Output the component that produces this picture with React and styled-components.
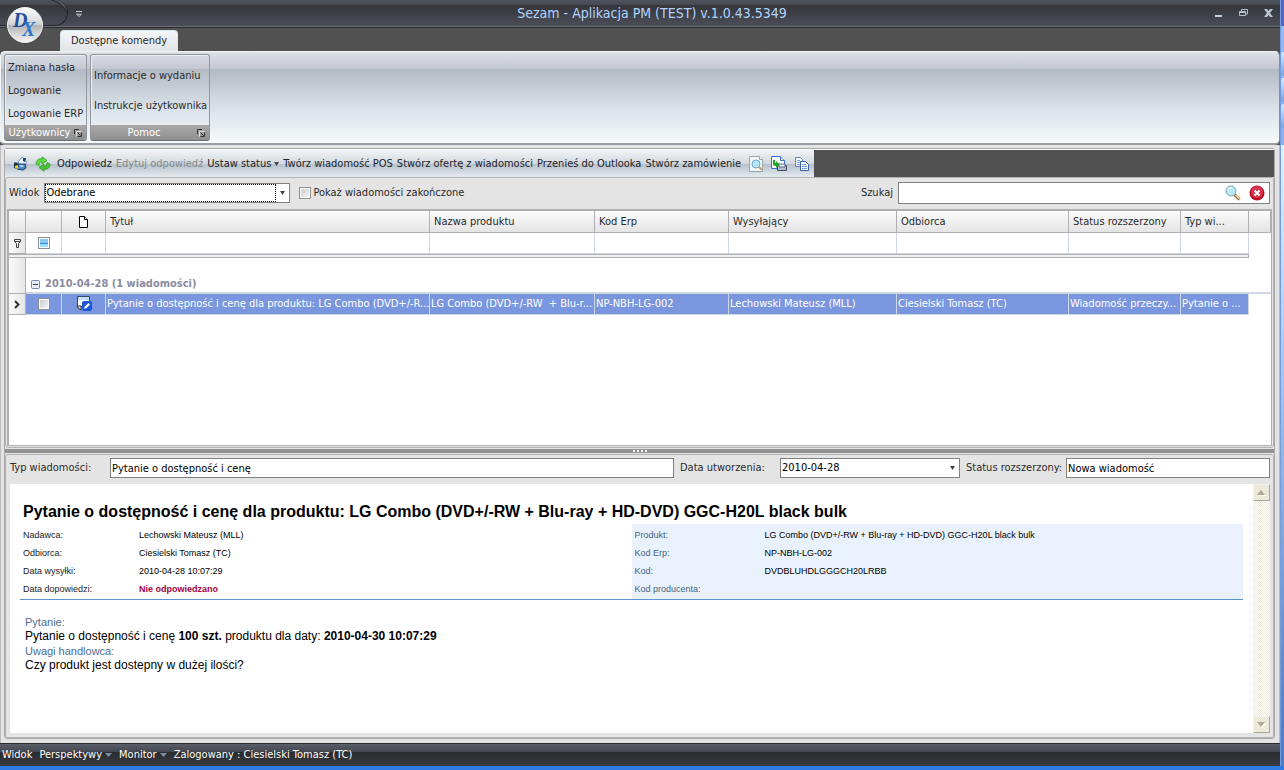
import React from "react"
import styled, { createGlobalStyle } from "styled-components"

const commands = [
  { label: "Odpowiedz" },
  { label: "Edytuj odpowiedź", disabled: true },
  { label: "Ustaw status", menu: true },
  { label: "Twórz wiadomość POS" },
  { label: "Stwórz ofertę z wiadomości" },
  { label: "Przenieś do Outlooka" },
  { label: "Stwórz zamówienie" },
]

const columns = [
  { title: "Tytuł" },
  { title: "Nazwa produktu", width: 165 },
  { title: "Kod Erp", width: 134 },
  { title: "Wysyłający", width: 168 },
  { title: "Odbiorca", width: 172 },
  { title: "Status rozszerzony", width: 112 },
  { title: "Typ wi...", width: 68 },
]

const message = [
  "Pytanie o dostępność i cenę dla produktu: LG Combo (DVD+/-R...",
  "LG Combo (DVD+/-RW\u00a0 + Blu-r...",
  "NP-NBH-LG-002",
  "Lechowski Mateusz (MLL)",
  "Ciesielski Tomasz (TC)",
  "Wiadomość przeczy...",
  "Pytanie o ...",
]

const sender = [
  ["Nadawca:", "Lechowski Mateusz (MLL)"],
  ["Odbiorca:", "Ciesielski Tomasz (TC)"],
  ["Data wysyłki:", "2010-04-28 10:07:29"],
  ["Data dopowiedzi:", "Nie odpowiedzano"],
]

const product = [
  ["Produkt:", "LG Combo (DVD+/-RW + Blu-ray + HD-DVD) GGC-H20L black bulk"],
  ["Kod Erp:", "NP-NBH-LG-002"],
  ["Kod:", "DVDBLUHDLGGGCH20LRBB"],
  ["Kod producenta:", ""],
]

const Logo = () => (
  <svg width="38" height="38" viewBox="0 0 38 38">
    <defs>
      <linearGradient id="orb" x1="0" y1="0" x2="0" y2="1">
        <stop offset="0" stopColor="#ffffff" />
        <stop offset="0.48" stopColor="#d3d3d6" />
        <stop offset="0.52" stopColor="#b4b4b8" />
        <stop offset="1" stopColor="#f6f6f6" />
      </linearGradient>
    </defs>
    <circle cx="19" cy="19" r="18.5" fill="#3a3b40" />
    <circle cx="19" cy="19" r="17.5" fill="url(#orb)" stroke="#f2f2f2" />
    <g fontFamily="Liberation Serif, serif" fontStyle="italic" fontWeight="bold">
      <text x="7" y="21" fontSize="20" fill="#1f4f9c">D</text>
      <text x="16" y="30" fontSize="20" fill="#2b78c8">X</text>
    </g>
  </svg>
)

const QuickMenuIcon = () => (
  <svg width="6" height="6" viewBox="0 0 6 6" fill="none" stroke="#c9ccd2">
    <path d="M0 .5h6M.5 3.2 3 5.5 5.500 3.200z" />
  </svg>
)

const MinimizeIcon = () => (
  <svg width="9" height="10" viewBox="0 0 9 10">
    <path d="M1 7h7v2H1z" fill="#c6d0db" />
  </svg>
)

const RestoreIcon = () => (
  <svg width="9" height="10" viewBox="0 0 9 10" fill="none" stroke="#b4bfca">
    <path d="M2.500 3V1.500h6V6H7" />
    <path d="M.5 3.500h6v4h-6zM.5 4.500h6" />
  </svg>
)

const CloseIcon = () => (
  <svg width="9" height="10" viewBox="0 0 9 10">
    <path d="M0 1h3l1.500 2L6 1h3L6 5l3 4H6L4.500 7 3 9H0l3-4z" fill="#b9c6d2" />
  </svg>
)

const LauncherIcon = () => (
  <svg width="8" height="8" viewBox="0 0 8 8" fill="none" stroke="#333">
    <path d="M.5 5V.5H5" />
    <path d="M2.500 7.500v-5h5" stroke="#ddd" />
    <path d="m3.500 3.500 3 3M7.500 3.500v4h-4" />
  </svg>
)

const MailIcon = () => (
  <svg width="16" height="16" viewBox="0 0 16 16">
    <path d="m6 6 4-5 4 3v5l-6 2z" fill="#eaf5ff" stroke="#6f93bd" />
    <path d="M11 2h3l-1 4-2-1z" fill="#1c3e70" />
    <path d="M6 8h7l1 4-3 2-6-1z" fill="#4d87c4" stroke="#1f3c63" />
    <path d="m7 9 5 .5-2 2z" fill="#cfe6fa" />
    <path d="M2 6.500h3L7 9l-2 4-3-1z" fill="#16324f" />
    <path d="m3 10 3-1v4l-3-1z" fill="#f6d31c" />
  </svg>
)

const RefreshIcon = () => (
  <svg width="16" height="16" viewBox="0 0 16 16" stroke="#2b9420" strokeWidth=".7">
    <path d="M1 8C1 4 4 2 7 3V.8L12 4.500 7 8V6C5 5.500 4 7 4 9.500z" fill="#5edb40" />
    <path d="M15 8c0 4-3 6-6 5v2.200L4 11.500 9 8v2c2 .5 3-1 3-3.500z" fill="#43c62e" />
  </svg>
)

const PreviewIcon = () => (
  <svg width="16" height="16" viewBox="0 0 16 16">
    <path d="M1.500.5h10l3 3v12h-13z" fill="#f3f6f8" stroke="#9ba5ae" />
    <path d="M11.500.5v3h3" fill="#fff" stroke="#9ba5ae" />
    <circle cx="8" cy="8" r="4" fill="#b9e6f8" stroke="#6aa9cb" />
    <path d="m11 11 3 3" stroke="#caa266" strokeWidth="2" />
  </svg>
)

const ExportIcon = () => (
  <svg width="16" height="16" viewBox="0 0 16 16">
    <path d="M.5.5h9l4 4v8H.5z" fill="#fff" stroke="#3570d4" />
    <path d="M9.500.5v4h4" fill="#d4e5fb" stroke="#3570d4" />
    <path d="M6.500 9.500h9v5h-9z" fill="#b6bccb" stroke="#3f4a6b" />
    <path d="M8 8h6v3H8z" fill="#e9edf4" stroke="#5d6a89" />
    <path d="M2 4v4c0 1 1 2 3 2v2l4-3.500L5 5v2C4 7 4 6 4 4z" fill="#20a42c" />
  </svg>
)

const CopyIcon = () => (
  <svg width="16" height="16" viewBox="0 0 16 16" fill="#f7faff" stroke="#5f83bb">
    <path d="M1.500 1.500h5l2 2v7h-7z" />
    <path d="M3 4.500h3m-3 2h3m-3 2h3" stroke="#6ea2e8" />
    <path d="M6.500 5.500h5l3 3v6h-8z" stroke="#3b5ea8" />
    <path d="M8 8.500h4m-4 2h5m-5 2h5" stroke="#6ea2e8" />
  </svg>
)

const SearchIcon = () => (
  <svg width="16" height="16" viewBox="0 0 16 16">
    <path d="m9.500 9.500 5 5" stroke="#7b5f36" strokeWidth="3" />
    <path d="m10.500 9.800 4 4" stroke="#edc888" strokeWidth="2" />
    <circle cx="6" cy="6" r="5" fill="#b6e8fa" stroke="#83a3b7" />
    <path d="M3 5c.5-2 2-2.500 4-2" stroke="#fff" fill="none" strokeWidth="1.500" />
  </svg>
)

const ClearIcon = () => (
  <svg width="16" height="16" viewBox="0 0 16 16">
    <circle cx="8" cy="8" r="7.500" fill="#b90d27" />
    <circle cx="8" cy="7" r="6" fill="#d93550" />
    <path d="m5.500 5.500 5 5m0-5-5 5" stroke="#fff" strokeWidth="2" />
  </svg>
)

const PageIcon = () => (
  <svg width="10" height="12" viewBox="0 0 10 12" fill="#fff" stroke="#000">
    <path d="M.5.5h5l3 3v8h-8z" />
    <path d="M5.500.5v3h3" />
  </svg>
)

const FilterIcon = () => (
  <svg width="7" height="9" viewBox="0 0 7 9" fill="none" stroke="#444">
    <path d="M.5.5h6v2l-2 2v4h-2v-4l-2-2zM.5 2.500h6" />
  </svg>
)

const CollapseIcon = () => (
  <svg width="9" height="9" viewBox="0 0 9 9">
    <rect x=".5" y=".5" width="8" height="8" rx="1" fill="#e8edf6" stroke="#7687a8" />
    <path d="M2 4.500h5" stroke="#33415f" />
  </svg>
)

const PointerIcon = () => (
  <svg width="6" height="9" viewBox="0 0 6 9" fill="none" stroke="#333" strokeWidth="2">
    <path d="m1 1 3.500 3.500L1 8" />
  </svg>
)

const EditedIcon = () => (
  <svg width="16" height="16" viewBox="0 0 16 16">
    <path d="M1.500.5h12v10h-9v3l-2-3h-1z" fill="#fff" stroke="#37476b" />
    <path d="M2 1h11v3H2z" fill="#bfe1fa" />
    <path d="M1 10h4v4l-3-2z" fill="#ddd" stroke="#333" />
    <rect x="6" y="5" width="10" height="10" rx="2" fill="#1c55d8" />
    <path d="m8 13 .8-2.500L12.500 7l1.600 1.500L10.500 12z" fill="#fff" />
  </svg>
)

const Caret = ({ color = "#444", size = 5 }) => (
  <svg width={size} height="4" viewBox="0 0 6 4" preserveAspectRatio="none">
    <path d="M0 0h6L3 4z" fill={color} />
  </svg>
)

const ScrollArrow = ({ up }) => (
  <svg width="9" height="6" viewBox="0 0 9 6">
    <path d={up ? "M1 6h8L5 1z" : "M1 1h8L5 6z"} fill="#fff" />
    <path d={up ? "M0 5h8L4 0z" : "M0 0h8L4 5z"} fill="#aca899" />
  </svg>
)

const App = () => {
  return (
    <Desktop>
      <GlobalStyle />
      <Window>
        <TitleBar>
          <QuickAccess>
            <OrbSocket />
            <PlainButton aria-label="Dostosuj pasek">
              <QuickMenuIcon />
            </PlainButton>
          </QuickAccess>
          <Title>Sezam - Aplikacja PM (TEST) v.1.0.43.5349</Title>
          <WindowButtons>
            <PlainButton aria-label="Minimalizuj"><MinimizeIcon /></PlainButton>
            <PlainButton aria-label="Przywróć"><RestoreIcon /></PlainButton>
            <PlainButton aria-label="Zamknij"><CloseIcon /></PlainButton>
          </WindowButtons>
          <OrbButton aria-label="Menu aplikacji"><Logo /></OrbButton>
        </TitleBar>
        <TabStrip>
          <Tab>Dostępne komendy</Tab>
        </TabStrip>
        <Ribbon>
          <RibbonGroup>
            <RibbonItems>
              <RibbonButton>Zmiana hasła</RibbonButton>
              <RibbonButton>Logowanie</RibbonButton>
              <RibbonButton>Logowanie ERP</RibbonButton>
            </RibbonItems>
            <RibbonCaption>
              <span>Użytkownicy</span>
              <PlainButton aria-label="Więcej: Użytkownicy"><LauncherIcon /></PlainButton>
            </RibbonCaption>
          </RibbonGroup>
          <RibbonGroup $wide>
            <RibbonItems $loose>
              <RibbonButton>Informacje o wydaniu</RibbonButton>
              <RibbonButton>Instrukcje użytkownika</RibbonButton>
            </RibbonItems>
            <RibbonCaption>
              <span>Pomoc</span>
              <PlainButton aria-label="Więcej: Pomoc"><LauncherIcon /></PlainButton>
            </RibbonCaption>
          </RibbonGroup>
        </Ribbon>

        <Workspace>
          <Frame>
            <ToolbarRow>
              <Toolbar>
                <PlainButton aria-label="Wyślij"><MailIcon /></PlainButton>
                <PlainButton aria-label="Odśwież"><RefreshIcon /></PlainButton>
                <Commands>
                  {commands.map(({ label, disabled, menu }) => (
                    <ToolButton key={label} disabled={disabled}>
                      {label}
                      {menu && <Caret />}
                    </ToolButton>
                  ))}
                </Commands>
                <PlainButton aria-label="Podgląd"><PreviewIcon /></PlainButton>
                <PlainButton aria-label="Eksport"><ExportIcon /></PlainButton>
                <PlainButton aria-label="Kopiuj"><CopyIcon /></PlainButton>
              </Toolbar>
            </ToolbarRow>

            <ListPanel>
              <FilterBar>
                <label htmlFor="view">Widok</label>
                <SelectBox $width={246}>
                  <Select id="view" $focused defaultValue="Odebrane">
                    <option>Odebrane</option>
                  </Select>
                  <Caret />
                </SelectBox>
                <CheckLabel>
                  <Checkbox type="checkbox" />
                  Pokaż wiadomości zakończone
                </CheckLabel>
                <SearchLabel htmlFor="search">Szukaj</SearchLabel>
                <SearchBox>
                  <input id="search" type="text" />
                  <PlainButton aria-label="Znajdź"><SearchIcon /></PlainButton>
                  <PlainButton aria-label="Wyczyść"><ClearIcon /></PlainButton>
                </SearchBox>
              </FilterBar>

              <GridBox>
                <Grid>
                  <colgroup>
                    <col width="17" />
                    <col width="36" />
                    <col width="44" />
                    {columns.map(c => (
                      <col key={c.title} width={c.width} />
                    ))}
                    <col width="22" />
                  </colgroup>
                  <thead>
                    <HeadRow>
                      <th />
                      <th />
                      <th><PageIcon /></th>
                      {columns.map(c => (
                        <th key={c.title} className="text">{c.title}</th>
                      ))}
                      <th />
                    </HeadRow>
                    <FilterRow>
                      <td className="indicator"><FilterIcon /></td>
                      <td>
                        <Checkbox type="checkbox" $mixed aria-label="Filtruj zaznaczone" />
                      </td>
                      <td />
                      {columns.map(c => (
                        <td key={c.title} />
                      ))}
                      <td className="rest" />
                    </FilterRow>
                    <BandRow>
                      <td colSpan={columns.length + 3} />
                      <td className="rest" />
                    </BandRow>
                  </thead>
                  <tbody>
                    <GroupRow>
                      <td className="indicator" />
                      <td colSpan={columns.length + 3}>
                        <GroupTitle>
                          <CollapseIcon />
                          2010-04-28 (1 wiadomości)
                        </GroupTitle>
                      </td>
                    </GroupRow>
                    <DataRow>
                      <td className="indicator"><PointerIcon /></td>
                      <td><Checkbox type="checkbox" aria-label="Zaznacz wiadomość" /></td>
                      <td><EditedIcon /></td>
                      {message.map(text => (
                        <td key={text} className="text">{text}</td>
                      ))}
                      <td className="rest" />
                    </DataRow>
                  </tbody>
                </Grid>
              </GridBox>
            </ListPanel>

            <Splitter>
              <i />
              <i />
              <i />
              <i />
            </Splitter>

            <DetailPanel>
              <DetailBar>
                <FieldLabel htmlFor="type" $width={96}>Typ wiadomości:</FieldLabel>
                <TextInput id="type" $grow defaultValue="Pytanie o dostępność i cenę" />
                <FieldLabel htmlFor="created" $width={96}>Data utworzenia:</FieldLabel>
                <SelectBox $width={180}>
                  <Select id="created" defaultValue="2010-04-28">
                    <option>2010-04-28</option>
                  </Select>
                  <Caret />
                </SelectBox>
                <FieldLabel htmlFor="status" $width={96}>Status rozszerzony:</FieldLabel>
                <TextInput id="status" defaultValue="Nowa wiadomość" />
              </DetailBar>

              <Viewer>
                <Document>
                  <h1>
                    Pytanie o dostępność i cenę dla produktu: LG Combo (DVD+/-RW + Blu-ray + HD-DVD)
                    GGC-H20L black bulk
                  </h1>
                  <Summary>
                    <Facts $labelWidth={116}>
                      {sender.map(([name, value]) => (
                        <React.Fragment key={name}>
                          <dt>{name}</dt>
                          <dd className={value === "Nie odpowiedzano" ? "alert" : undefined}>{value}</dd>
                        </React.Fragment>
                      ))}
                    </Facts>
                    <Facts $labelWidth={130} $tinted>
                      {product.map(([name, value]) => (
                        <React.Fragment key={name}>
                          <dt>{name}</dt>
                          <dd>{value}</dd>
                        </React.Fragment>
                      ))}
                    </Facts>
                  </Summary>
                  <Question>
                    <h2>Pytanie:</h2>
                    <p>
                      Pytanie o dostępność i cenę <b>100 szt.</b> produktu dla daty:{" "}
                      <b>2010-04-30 10:07:29</b>
                    </p>
                    <h2>Uwagi handlowca:</h2>
                    <p>Czy produkt jest dostepny w dużej ilości?</p>
                  </Question>
                </Document>
                <ScrollTrack>
                  <ScrollButton aria-label="W górę"><ScrollArrow up /></ScrollButton>
                  <ScrollButton aria-label="W dół"><ScrollArrow /></ScrollButton>
                </ScrollTrack>
              </Viewer>
            </DetailPanel>
          </Frame>
        </Workspace>

        <StatusBar>
          <StatusButton>Widok</StatusButton>
          <StatusButton>Perspektywy <Caret color="#7f8fa3" size={7} /></StatusButton>
          <StatusButton>Monitor <Caret color="#7f8fa3" size={7} /></StatusButton>
          <span>Zalogowany : Ciesielski Tomasz (TC)</span>
        </StatusBar>
      </Window>
      <BackgroundWindow>
        <div />
        <div />
        <div />
      </BackgroundWindow>
    </Desktop>
  )
}

const GlobalStyle = createGlobalStyle`
  * {
    box-sizing: border-box;
  }
  body {
    margin: 0;
    background: #2f7be6;
    font-family: "DejaVu Sans Condensed", "DejaVu Sans", sans-serif;
    font-size: 11px;
    line-height: 14px;
    color: #2a2a2a;
  }
  button, input, select {
    font: inherit;
    color: inherit;
    margin: 0;
    padding: 0;
    border: 0;
    border-radius: 0;
  }
  svg {
    display: block;
    flex: none;
  }
`

const Desktop = styled.div`
  display: grid;
  grid-template-columns: minmax(0, 1fr) 4px;
  min-height: 100vh;
  padding-bottom: 4px;
`

const Window = styled.div`
  display: flex;
  flex-direction: column;
  background: #515151;
`

const PlainButton = styled.button`
  display: flex;
  align-items: center;
  justify-content: center;
  background: none;
`

const TitleBar = styled.header`
  position: relative;
  display: grid;
  grid-template-columns: 1fr auto 1fr;
  height: 28px;
  background: linear-gradient(#50545f, #444852 5px, #35363b 5px, #4b4e58 26px, #6a6e78 26px, #6a6e78 27px, #2a2b31 27px);
`

const QuickAccess = styled.div`
  display: flex;
  gap: 8px;
`

const OrbSocket = styled.div`
  width: 68px;
  height: 26px;
  border: 1px solid #24252a;
  border-width: 0 1px 1px 0;
  border-radius: 0 14px 14px 0;
  background: radial-gradient(circle at 8px 27px, transparent 27px, #26272c 28px, #555862 29px, #666a74 46px) right / 32px 26px no-repeat;
`

const OrbButton = styled.button`
  position: absolute;
  left: 6px;
  top: 6px;
  background: none;
`

const Title = styled.h1`
  margin: 0;
  padding-left: 24px;
  font-size: 14px;
  line-height: 26px;
  font-weight: 400;
  color: #b0d4ff;
`

const WindowButtons = styled.div`
  display: flex;
  justify-content: flex-end;
  gap: 16px;
  padding-right: 7px;
  height: 26px;
`

const TabStrip = styled.nav`
  display: flex;
  align-items: flex-end;
  height: 23px;
  padding-left: 60px;
`

const Tab = styled.button`
  height: 21px;
  padding: 0 10px;
  border: 1px solid #d4e8ee;
  border-bottom: 0;
  border-radius: 4px 4px 0 0;
  background: linear-gradient(#f4f5f7, #e2e4e9);
`

const Ribbon = styled.section`
  display: flex;
  align-items: flex-start;
  gap: 3px;
  height: 94px;
  padding: 2px 3px;
  border: 1px solid #f2f4f6;
  border-right-color: #8b8f94;
  border-bottom: 2px solid #9a9da1;
  border-radius: 5px;
  background: linear-gradient(#dee1e6, #c3c7d1 17px, #b3bac4 17px, #dbe3ea 58px, #f6fafb);
`

const RibbonGroup = styled.div`
  display: flex;
  flex-direction: column;
  width: ${({ $wide }) => ($wide ? "120px" : "83px")};
  height: 87px;
  border: 1px solid #93979d;
  border-bottom-color: #6e6e6e;
  border-radius: 3px;
  box-shadow: inset 1px 1px 0 #eceef1;
`

const RibbonItems = styled.div`
  flex: 1;
  display: flex;
  flex-direction: column;
  justify-content: center;
  align-items: flex-start;
  gap: ${({ $loose }) => ($loose ? "16px" : "9px")};
  padding: 2px 0 0 3px;
`

const RibbonButton = styled.button`
  background: none;
  white-space: nowrap;
`

const RibbonCaption = styled.div`
  display: flex;
  height: 15px;
  padding-right: 4px;
  background: linear-gradient(#a9a9a9, #8f8f8f);
  color: #fff;
  span {
    flex: 1;
    line-height: 15px;
    text-align: center;
  }
`

const Workspace = styled.main`
  flex: 1;
  display: flex;
  padding: 3px 4px 4px 3px;
  background: #e4e4e4;
  border: 1px solid #bcbcbc;
  border-width: 0 1px;
`

const Frame = styled.div`
  flex: 1;
  min-width: 0;
  display: flex;
  flex-direction: column;
  border: 1px solid #a8a8a8;
  border-radius: 3px;
`

const ToolbarRow = styled.div`
  display: flex;
  height: 28px;
  background: #515151;
  border-top: 1px solid #fff;
`

const Toolbar = styled.div`
  display: flex;
  align-items: center;
  gap: 7px;
  padding: 0 4px 0 7px;
  background: linear-gradient(#f2f4f6, #d2d9df 50%, #b4bec7 50%, #e4ecf1);
`

const Commands = styled.div`
  display: flex;
  gap: 4px;
  margin-left: -1px;
`

const ToolButton = styled.button`
  display: flex;
  align-items: center;
  gap: 3px;
  background: none;
  white-space: nowrap;
  color: #1e2226;
  &:disabled {
    color: #84898d;
  }
`

const ListPanel = styled.section`
  flex: 1;
  display: flex;
  flex-direction: column;
  padding: 3px 1px 1px;
  border: 1px solid #b4b4b4;
  border-radius: 3px;
`

const FilterBar = styled.div`
  display: flex;
  align-items: center;
  gap: 5px;
  height: 24px;
  padding: 0 2px;
`

const SelectBox = styled.div`
  display: flex;
  align-items: center;
  gap: 4px;
  width: ${({ $width }) => $width}px;
  height: 20px;
  padding-right: 4px;
  border: 1px solid #808080;
  background: #fff;
`

const Select = styled.select`
  flex: 1;
  height: 18px;
  appearance: none;
  border: 1px ${({ $focused }) => ($focused ? "dotted #000" : "solid #fff")};
  background: #fff;
  color: #000;
`

const CheckLabel = styled.label`
  display: flex;
  align-items: center;
  gap: 2px;
  padding-left: 4px;
`

const Checkbox = styled.input`
  appearance: none;
  display: inline-block;
  width: 12px;
  height: 12px;
  vertical-align: middle;
  border: 1px solid #8a8f94;
  background: ${({ $mixed }) =>
    $mixed ? "linear-gradient(#8ac8f2 5px, #3388d0 5px, #3388d0 6px, #9adcff 6px)" : "linear-gradient(135deg, #c8c8c8, #f8f8f8)"};
  box-shadow: inset 0 0 0 1px #fff;
`

const SearchLabel = styled.label`
  margin-left: auto;
`

const SearchBox = styled.div`
  display: flex;
  align-items: center;
  gap: 8px;
  width: 372px;
  height: 22px;
  padding-right: 4px;
  border: 1px solid #808080;
  background: #fff;
  input {
    flex: 1;
    min-width: 0;
    height: 18px;
    outline: 0;
  }
`

const GridBox = styled.div`
  flex: 1;
  min-height: 236px;
  margin-top: 4px;
  border: 2px solid #b0b0b0;
  border-width: 2px 1px 1px 2px;
  background: #fff;
`

const Grid = styled.table`
  width: 100%;
  table-layout: fixed;
  border-collapse: separate;
  border-spacing: 0;
  td,
  th {
    padding: 0;
    font-weight: 400;
    text-align: center;
    overflow: hidden;
    white-space: nowrap;
  }
  td > svg,
  th > svg {
    margin: 0 auto;
  }
  .text {
    text-align: left;
  }
  .indicator {
    background: linear-gradient(90deg, #fafafa, #e6e6e6);
    border-right: 1px solid #b0b0b0;
    border-bottom: 1px solid #b0b0b0;
  }
`

const HeadRow = styled.tr`
  height: 22px;
  th {
    background: linear-gradient(#fbfbfb, #e4e4e4);
    border-right: 1px solid #b0b0b0;
    border-bottom: 1px solid #b0b0b0;
  }
  .text {
    padding-left: 4px;
  }
`

const FilterRow = styled.tr`
  height: 21px;
  td {
    border-right: 1px solid #cfd6e4;
    border-bottom: 1px solid #cfd6e4;
  }
  td.rest {
    border: 0;
  }
`

const BandRow = styled.tr`
  height: 4px;
  td {
    background: #f0f0f0;
    border: 1px solid #b0b0b0;
    border-left: 0;
  }
  td.rest {
    background: #fff;
    border: 0;
  }
`

const GroupRow = styled.tr`
  height: 36px;
  td {
    border-bottom: 2px solid #cfd6e4;
    vertical-align: bottom;
  }
`

const GroupTitle = styled.div`
  display: flex;
  align-items: center;
  gap: 5px;
  padding: 0 0 1px 5px;
  font-weight: 700;
  color: #8b8b9f;
`

const DataRow = styled.tr`
  height: 21px;
  td {
    background: #7a96df;
    color: #fff;
    border-right: 1px solid #cfd6e4;
    border-bottom: 1px solid #cfd6e4;
  }
  .text {
    padding-left: 1px;
  }
  td.rest {
    background: #fff;
    border: 0;
  }
`

const Splitter = styled.div`
  display: flex;
  justify-content: center;
  align-items: center;
  gap: 2px;
  height: 4px;
  margin: 1px 0;
  background: #929292;
  i {
    width: 2px;
    height: 2px;
    background: #f4f4f4;
  }
`

const DetailPanel = styled.section`
  display: flex;
  flex-direction: column;
  padding: 3px 3px 4px 4px;
  border: 1px solid #b4b4b4;
  border-radius: 3px;
`

const DetailBar = styled.div`
  display: flex;
  align-items: center;
  gap: 6px;
  padding-bottom: 6px;
`

const FieldLabel = styled.label`
  width: ${({ $width }) => $width}px;
  margin-right: -2px;
  white-space: nowrap;
`

const TextInput = styled.input`
  ${({ $grow }) => ($grow ? "flex: 1; min-width: 0;" : "width: 204px;")}
  height: 20px;
  padding: 0 1px;
  border: 1px solid #808080;
  background: #fff;
  color: #000;
`

const Viewer = styled.div`
  display: flex;
  height: 249px;
  background: #fff;
`

const Document = styled.article`
  flex: 1;
  padding: 16px 10px 0;
  font-family: "Liberation Sans", Arial, sans-serif;
  color: #000;
  h1 {
    margin: 0;
    padding-left: 3px;
    font-size: 16px;
    line-height: 24px;
    font-weight: 700;
    white-space: nowrap;
  }
`

const Summary = styled.div`
  display: grid;
  grid-template-columns: 1fr 1fr;
  border-bottom: 1px solid #5f93cf;
`

const Facts = styled.dl`
  display: grid;
  grid-template-columns: ${({ $labelWidth }) => $labelWidth}px 1fr;
  align-content: start;
  margin: 0;
  padding: 2px 3px 1px;
  font-size: 9px;
  line-height: 18px;
  background: ${({ $tinted }) => ($tinted ? "#e9f2fc" : "none")};
  dt {
    color: ${({ $tinted }) => ($tinted ? "#46627f" : "#222")};
  }
  dd {
    margin: 0;
    white-space: nowrap;
  }
  .alert {
    font-weight: 700;
    color: #a8003c;
  }
`

const Question = styled.div`
  padding: 15px 5px;
  font-size: 12px;
  line-height: 15px;
  h2 {
    margin: 0;
    font-size: 11px;
    line-height: 14px;
    font-weight: 400;
    color: #4a6c92;
  }
  p {
    margin: 0;
  }
`

const ScrollTrack = styled.div`
  display: flex;
  flex-direction: column;
  justify-content: space-between;
  width: 17px;
  background: repeating-conic-gradient(#ece9d8 0 25%, #fff 0 50%) 0 0 / 2px 2px;
`

const ScrollButton = styled.button`
  display: flex;
  align-items: center;
  justify-content: center;
  height: 17px;
  background: #ece9d8;
  border: 1px solid #f6f4ea;
  border-right-color: #aca899;
  border-bottom-color: #aca899;
`

const StatusBar = styled.footer`
  display: flex;
  align-items: center;
  gap: 7px;
  height: 23px;
  padding: 1px 0 0 2px;
  color: #fff;
  background: linear-gradient(#2a2b30 1px, #5a5e69 1px, #43464f 9px, #2a2b2f 9px, #3a3b40);
`

const StatusButton = styled.button`
  display: flex;
  align-items: center;
  gap: 3px;
  background: none;
`

const BackgroundWindow = styled.aside`
  display: flex;
  flex-direction: column;
  gap: 2px;
  padding-top: 52px;
  border-left: 1px solid #6f9de0;
  background: linear-gradient(#5a5fc8 26px, #9db8f0 26px, #8eaeea 145px, #e6effc 145px, #4a79c4);
  div {
    height: 24px;
    border-radius: 3px 0 0 3px;
    background: linear-gradient(#dce8fb, #7fa0dc);
  }
`

export default App
